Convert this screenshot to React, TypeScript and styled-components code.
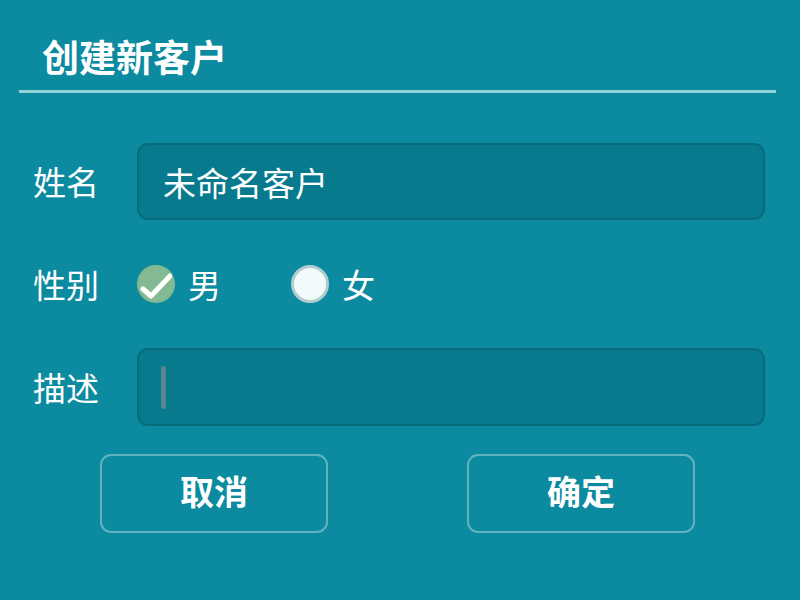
import React from "react";
import styled, { createGlobalStyle } from "styled-components";

const Global = createGlobalStyle`
  html, body {
    margin: 0;
    padding: 0;
    background: #0b8aa0;
    font-family: "Noto Sans CJK SC", "Noto Sans", sans-serif;
    color: #ffffff;
  }
`;

const Page = styled.div`
  width: 800px;
  height: 600px;
  background: #0b8aa0;
  display: flex;
  flex-direction: column;
  overflow: hidden;
`;

const Header = styled.div`
  height: 90px;
  display: flex;
  align-items: center;
  padding-left: 42px;
  padding-top: 22px;
  box-sizing: border-box;
`;

const Title = styled.h1`
  margin: 0;
  font-size: 37px;
  line-height: 1;
  font-weight: 700;
`;

const Divider = styled.div`
  height: 3px;
  margin-left: 19px;
  width: 757px;
  background: #94d2da;
`;

const Form = styled.div`
  display: flex;
  flex-direction: column;
  padding: 50px 35px 0 33px;
`;

const Row = styled.div<{ $h: number }>`
  display: flex;
  align-items: center;
  height: ${(p) => p.$h}px;
`;

const Label = styled.div`
  width: 104px;
  flex: none;
  font-size: 33px;
  line-height: 1;
`;

const Field = styled.div`
  flex: 1;
  height: 100%;
  box-sizing: border-box;
  background: #077b8d;
  border: 2px solid #066c7c;
  border-radius: 11px;
  display: flex;
  align-items: center;
  padding-left: 24px;
  font-size: 33px;
`;

const Caret = styled.div`
  width: 5px;
  height: 43px;
  border-radius: 3px;
  background: #5a8791;
  margin-left: -2px;
`;

const Options = styled.div`
  display: flex;
  align-items: center;
`;

const Option = styled.div<{ $w: number }>`
  display: flex;
  align-items: center;
  width: ${(p) => p.$w}px;
  gap: 13px;
  font-size: 33px;
`;

const Checked = styled.div`
  width: 38px;
  height: 38px;
  border-radius: 50%;
  background: #84ba93;
  display: flex;
  align-items: center;
  justify-content: center;
`;

const Unchecked = styled.div`
  width: 38px;
  height: 38px;
  box-sizing: border-box;
  border-radius: 50%;
  background: #f2fbfc;
  border: 3px solid #b3cdcf;
`;

const Buttons = styled.div`
  display: flex;
  gap: 139px;
  padding-left: 100px;
  margin-top: 28px;
`;

const Button = styled.button`
  width: 228px;
  height: 79px;
  box-sizing: border-box;
  background: transparent;
  border: 2px solid #62b2c0;
  border-radius: 11px;
  color: #ffffff;
  font-family: "Noto Sans CJK SC", "Noto Sans", sans-serif;
  font-size: 34px;
  line-height: 1;
  font-weight: 700;
  padding: 0 0 6px 0;
`;

export default function App() {
  return (
    <Page>
      <Global />
      <Header>
        <Title>创建新客户</Title>
      </Header>
      <Divider />
      <Form>
        <Row $h={77}>
          <Label>姓名</Label>
          <Field>未命名客户</Field>
        </Row>
        <Row $h={128}>
          <Label>性别</Label>
          <Options>
            <Option $w={154}>
              <Checked>
                <svg width="32" height="32" viewBox="0 0 32 32">
                  <path d="M3 21 L11 28 L30 8" fill="none" stroke="#ffffff" strokeWidth="5" strokeLinecap="round" strokeLinejoin="round" />
                </svg>
              </Checked>
              男
            </Option>
            <Option $w={120}>
              <Unchecked />
              女
            </Option>
          </Options>
        </Row>
        <Row $h={78}>
          <Label>描述</Label>
          <Field>
            <Caret />
          </Field>
        </Row>
      </Form>
      <Buttons>
        <Button>取消</Button>
        <Button>确定</Button>
      </Buttons>
    </Page>
  );
}
